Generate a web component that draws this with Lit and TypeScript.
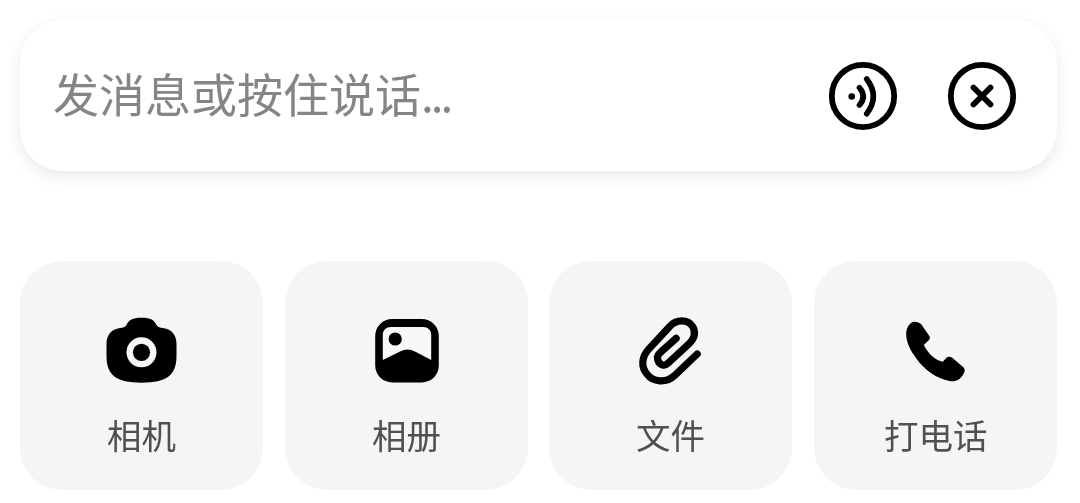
import { LitElement, html, css, svg } from 'lit';
import { customElement } from 'lit/decorators.js';

const cameraIcon = svg`
  <path d="M24.5 15C27 10 30 7.7 39.5 7.7C49 7.7 52 10 54.5 15C56 17.5 58 17.5 61 18C70 19.5 74.5 25 74.5 34L74.5 46C74.5 65 65 72.7 39.5 72.7C14 72.7 4.5 65 4.5 46L4.5 34C4.5 25 9 19.5 18 18C21 17.5 23 17.5 24.5 15Z" fill="#000"/>
  <circle cx="39.5" cy="42.3" r="15" fill="#f8f8f8"/>
  <circle cx="39.5" cy="42.3" r="8.6" fill="#000"/>`;

const galleryIcon = svg`
  <rect x="9.2" y="9" width="63.6" height="63.4" rx="17" fill="#000"/>
  <path d="M16.8 50L16.8 25C16.8 20 20 17 25 17L57 17C62 17 65.2 20 65.2 25L65.2 50L49 41.5Q41.5 37.5 34 41.5Z" fill="#f8f8f8"/>
  <circle cx="29.2" cy="29" r="6.6" fill="#000"/>`;

const clipIcon = svg`
  <path d="M66.2 44L43.5 65.7C35.2 73.3 21.8 72.3 16.2 64.3C9.5 56.7 10.8 46.7 17.5 39.3L38.5 16.7C45.2 9 56.8 9 61.8 16.7C65.2 23.3 63.5 28.3 58.5 33.3L36.8 53.3C33.5 56.7 28.5 55 26.8 50C26 47.5 26.8 45 28.5 43.3L45.2 28.3" fill="none" stroke="#000" stroke-width="7.2" stroke-linecap="round" stroke-linejoin="round"/>`;

const phoneIcon = svg`
  <path d="M11.2 23.3C11.5 17 15 12 19.5 11.7C22 11.6 24.5 12.5 26.2 14.3L34 25.5C35.5 27.5 35 29 33.5 30.5L28.8 35C31 39.5 34 43.5 37.8 46.7C41 49.3 44.3 51 47.8 51.7L51.5 47.8C53.5 46.2 56 46.8 57.8 48.3L67.8 56.7C69.5 58 70 60 69.5 61.7C68 65.5 65.5 68.5 62.8 70C60 71.5 57 71.5 54.5 71C48 69.5 42 67.5 36.2 63.3C30.5 59 25 54 21.2 48.3C17.5 43.5 14.5 38.5 12.8 33.3C11.8 30 11 26.5 11.2 23.3Z" fill="#000"/>`;

const actions = [
  { label: '相机', icon: cameraIcon },
  { label: '相册', icon: galleryIcon },
  { label: '文件', icon: clipIcon },
  { label: '打电话', icon: phoneIcon },
];

@customElement('app-root')
export class AppRoot extends LitElement {
  static styles = css`
    :host {
      display: block;
      background: #fff;
      height: 503px;
      padding: 20px 23px 0 20px;
      box-sizing: border-box;
      font-family: 'Noto Sans CJK SC', 'Noto Sans', sans-serif;
    }
    .input-bar {
      display: flex;
      align-items: center;
      height: 151px;
      padding: 0 37px 0 33px;
      border-radius: 42px;
      background: #fff;
      box-shadow: 0 5px 16px rgba(0, 0, 0, 0.09);
    }
    .placeholder {
      flex: 1;
      font-size: 46px;
      line-height: 1;
      color: #858585;
      margin-top: -7px;
      will-change: transform;
    }
    .dots {
      letter-spacing: -3px;
    }
    .buttons {
      display: flex;
      gap: 43px;
    }
    .round-btn {
      display: block;
      width: 76px;
      height: 76px;
    }
    .actions {
      display: grid;
      grid-template-columns: repeat(4, 1fr);
      gap: 21.67px;
      margin-top: 90px;
    }
    .tile {
      display: flex;
      flex-direction: column;
      align-items: center;
      height: 229px;
      padding-top: 49px;
      box-sizing: border-box;
      border-radius: 42px;
      background: #f5f5f5;
    }
    .tile svg {
      display: block;
      width: 80px;
      height: 80px;
    }
    .label {
      margin-top: 21px;
      font-size: 34.5px;
      line-height: 46px;
      color: #505050;
      will-change: transform;
    }
  `;

  render() {
    return html`
      <div class="input-bar">
        <div class="placeholder">发消息或按住说话<span class="dots">...</span></div>
        <div class="buttons">
          <svg class="round-btn" viewBox="0 0 76 76" fill="none" stroke="#000" stroke-linecap="round">
            <circle cx="38" cy="38" r="31.2" stroke-width="5.8"/>
            <circle cx="26.7" cy="38.5" r="3.3" fill="#000" stroke="none"/>
            <path d="M34.5 29.7Q42 38.5 34.5 47" stroke-width="5.6"/>
            <path d="M41.7 21Q55 38.5 41.7 55.7" stroke-width="5.6"/>
          </svg>
          <svg class="round-btn" viewBox="0 0 76 76" fill="none" stroke="#000" stroke-linecap="round">
            <circle cx="38" cy="38" r="31.2" stroke-width="5.8"/>
            <path d="M29.5 29.5L46.5 46.5M46.5 29.5L29.5 46.5" stroke-width="5.8"/>
          </svg>
        </div>
      </div>
      <div class="actions">
        ${actions.map(
          (a) => html`
            <div class="tile">
              <svg viewBox="0 0 80 80">${a.icon}</svg>
              <div class="label">${a.label}</div>
            </div>
          `
        )}
      </div>
    `;
  }
}
